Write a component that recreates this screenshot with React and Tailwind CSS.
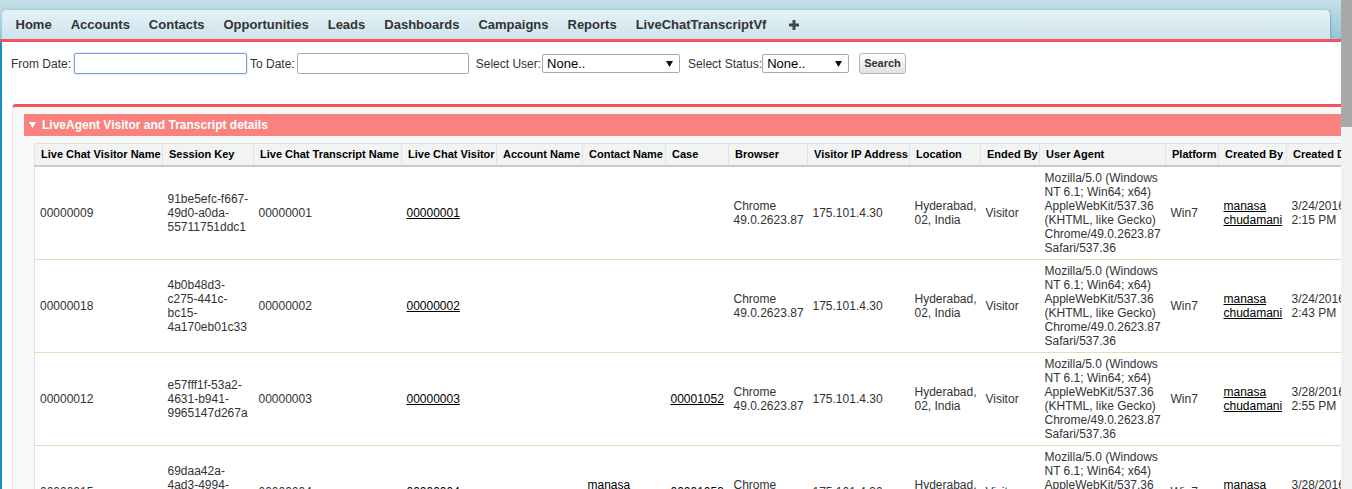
import React from "react";

const NAV = ["Home", "Accounts", "Contacts", "Opportunities", "Leads", "Dashboards", "Campaigns", "Reports", "LiveChatTranscriptVf"];

const COLS = [
  ["Live Chat Visitor Name", "w-[128px]"],
  ["Session Key", "w-[91px]"],
  ["Live Chat Transcript Name", "w-[148px]"],
  ["Live Chat Visitor", "w-[95px]"],
  ["Account Name", "w-[86px]"],
  ["Contact Name", "w-[83px]"],
  ["Case", "w-[63px]"],
  ["Browser", "w-[79px]"],
  ["Visitor IP Address", "w-[102px]"],
  ["Location", "w-[71px]"],
  ["Ended By", "w-[59px]"],
  ["User Agent", "w-[126px]"],
  ["Platform", "w-[53px]"],
  ["Created By", "w-[68px]"],
  ["Created Date", "w-[90px]"],
];

const UA = ["Mozilla/5.0 (Windows", "NT 6.1; Win64; x64)", "AppleWebKit/537.36", "(KHTML, like Gecko)", "Chrome/49.0.2623.87", "Safari/537.36"];

const ROWS = [
  {
    name: "00000009",
    key: ["91be5efc-f667-", "49d0-a0da-", "55711751ddc1"],
    tr: "00000001",
    visitor: "00000001",
    contact: null,
    cs: null,
    date: ["3/24/2016", "2:15 PM"],
  },
  {
    name: "00000018",
    key: ["4b0b48d3-", "c275-441c-", "bc15-", "4a170eb01c33"],
    tr: "00000002",
    visitor: "00000002",
    contact: null,
    cs: null,
    date: ["3/24/2016", "2:43 PM"],
  },
  {
    name: "00000012",
    key: ["e57fff1f-53a2-", "4631-b941-", "9965147d267a"],
    tr: "00000003",
    visitor: "00000003",
    contact: null,
    cs: "00001052",
    date: ["3/28/2016", "2:55 PM"],
  },
  {
    name: "00000015",
    key: ["69daa42a-", "4ad3-4994-", "a8c1-", "2e7f90b3d5c4"],
    tr: "00000004",
    visitor: "00000004",
    contact: ["manasa", "chudamani"],
    cs: "00001053",
    date: ["3/28/2016", "3:02 PM"],
  },
];

function Lines({ lines }) {
  return lines.map((l, i) => (
    <React.Fragment key={i}>
      {i > 0 && <br />}
      {l}
    </React.Fragment>
  ));
}

function Link({ children }) {
  return <a className="cursor-pointer text-black underline">{children}</a>;
}

function Select({ w }) {
  return (
    <div className={`flex h-[19px] items-center justify-between rounded-[2px] border border-[#a9a9a9] bg-white pl-[4px] pr-[6px] text-[13px] text-black ${w}`}>
      <span>None..</span>
      <svg width="7" height="6" viewBox="0 0 7 6">
        <polygon points="0,0 7,0 3.5,6" fill="#111" />
      </svg>
    </div>
  );
}

function Header() {
  return (
    <>
      <div className="h-[39px] bg-linear-to-b from-[#c6dfe7] to-[#93c7d8] pl-[2px] pr-[11px] pt-[10px]">
        <nav className="flex h-[29px] items-center rounded-t-[5px] bg-linear-to-b from-[#e6f2f6] to-[#cce4ec] pl-[4px] shadow-[1px_0_2px_rgba(0,60,80,0.25)]">
          {NAV.map((n) => (
            <span key={n} className="px-[9.5px] text-[13px] font-bold text-[#333]">
              {n}
            </span>
          ))}
          <span className="ml-[13px] flex items-center">
            <svg width="10" height="10" viewBox="0 0 10 10">
              <rect x="3.5" y="0" width="3" height="10" fill="#444" />
              <rect x="0" y="3.5" width="10" height="3" fill="#444" />
            </svg>
          </span>
        </nav>
      </div>
      <div className="h-[3px] bg-[#f5515f]" />
    </>
  );
}

function Filters() {
  return (
    <div className="mt-[11px] flex h-[21px] items-center pl-[9px] text-[12px] text-[#333]">
      <span>From Date:</span>
      <div className="ml-[3px] h-[21px] w-[173px] rounded-[2px] border border-[#7b9ed9] bg-white shadow-[0_0_2px_#a9c2ec]" />
      <span className="ml-[3px]">To Date:</span>
      <div className="ml-[2px] h-[21px] w-[172px] rounded-[2px] border border-[#a9a9a9] bg-white" />
      <span className="ml-[7px] mr-[1px]">Select User:</span>
      <Select w="w-[138px]" />
      <span className="ml-[8px]">Select Status:</span>
      <Select w="w-[87px]" />
      <button className="ml-[10px] h-[21px] rounded-[3px] border border-[#b5b5b5] bg-linear-to-b from-white to-[#e2e2e2] px-[4px] text-[11px] font-bold text-[#333]">
        Search
      </button>
    </div>
  );
}

function Table() {
  const td = "border-b border-[#e3deb8] px-[5px] py-[4px] align-middle whitespace-nowrap text-[12px] leading-[14px] text-[#333]";
  return (
    <table className="w-[1342px] table-fixed border-collapse border-l border-t border-[#e0e3e5] bg-white text-left">
      <colgroup>
        {COLS.map(([n, w]) => (
          <col key={n} className={w} />
        ))}
      </colgroup>
      <thead>
        <tr>
          {COLS.map(([n]) => (
            <th
              key={n}
              className="h-[22px] overflow-hidden whitespace-nowrap border-r border-b-2 border-r-[#e0e3e5] border-b-[#cccccc] bg-[#f2f3f3] pl-[6px] pr-[2px] text-left align-middle text-[11px] font-bold text-black"
            >
              {n}
            </th>
          ))}
        </tr>
      </thead>
      <tbody>
        {ROWS.map((r) => (
          <tr key={r.name}>
            <td className={td}>{r.name}</td>
            <td className={td}>
              <Lines lines={r.key} />
            </td>
            <td className={td}>{r.tr}</td>
            <td className={td}>
              <Link>{r.visitor}</Link>
            </td>
            <td className={td}></td>
            <td className={td}>
              {r.contact && (
                <Link>
                  <Lines lines={r.contact} />
                </Link>
              )}
            </td>
            <td className={td}>{r.cs && <Link>{r.cs}</Link>}</td>
            <td className={td}>
              <Lines lines={["Chrome", "49.0.2623.87"]} />
            </td>
            <td className={td}>175.101.4.30</td>
            <td className={td}>
              <Lines lines={["Hyderabad,", "02, India"]} />
            </td>
            <td className={td}>Visitor</td>
            <td className={td}>
              <Lines lines={UA} />
            </td>
            <td className={td}>Win7</td>
            <td className={td}>
              <Link>
                <Lines lines={["manasa", "chudamani"]} />
              </Link>
            </td>
            <td className={td}>
              <Lines lines={r.date} />
            </td>
          </tr>
        ))}
      </tbody>
    </table>
  );
}

function Block() {
  return (
    <div className="ml-[10px] mt-[30px] rounded-tl-[4px] border-l border-t-[3px] border-l-[#e2e2e2] border-t-[#f5515f] bg-[#f8f8f8] pl-[11px] pt-[7px]">
      <div className="flex h-[22px] items-center bg-[#f8837e] pl-[5px] text-[12px] font-bold text-white">
        <svg width="7" height="6" viewBox="0 0 7 6">
          <polygon points="0,0 7,0 3.5,6" fill="#fff" />
        </svg>
        <span className="ml-[6px]">LiveAgent Visitor and Transcript details</span>
      </div>
      <div className="ml-[10px] mt-[7px]">
        <Table />
      </div>
    </div>
  );
}

export default function App() {
  return (
    <div className="flex h-[489px] w-full overflow-hidden bg-white font-['Liberation_Sans',Arial,sans-serif]">
      <div className="relative min-w-0 flex-1 overflow-hidden">
        <Header />
        <div className="flex">
          <div className="w-[2px] shrink-0 self-stretch bg-[#1b8fbb]" />
          <div className="min-w-0 flex-1">
            <Filters />
            <Block />
          </div>
        </div>
      </div>
      <div className="w-[11px] shrink-0 bg-[#f1f1f1]">
        <div className="h-[127px] bg-[#a8a8a8]" />
      </div>
    </div>
  );
}
